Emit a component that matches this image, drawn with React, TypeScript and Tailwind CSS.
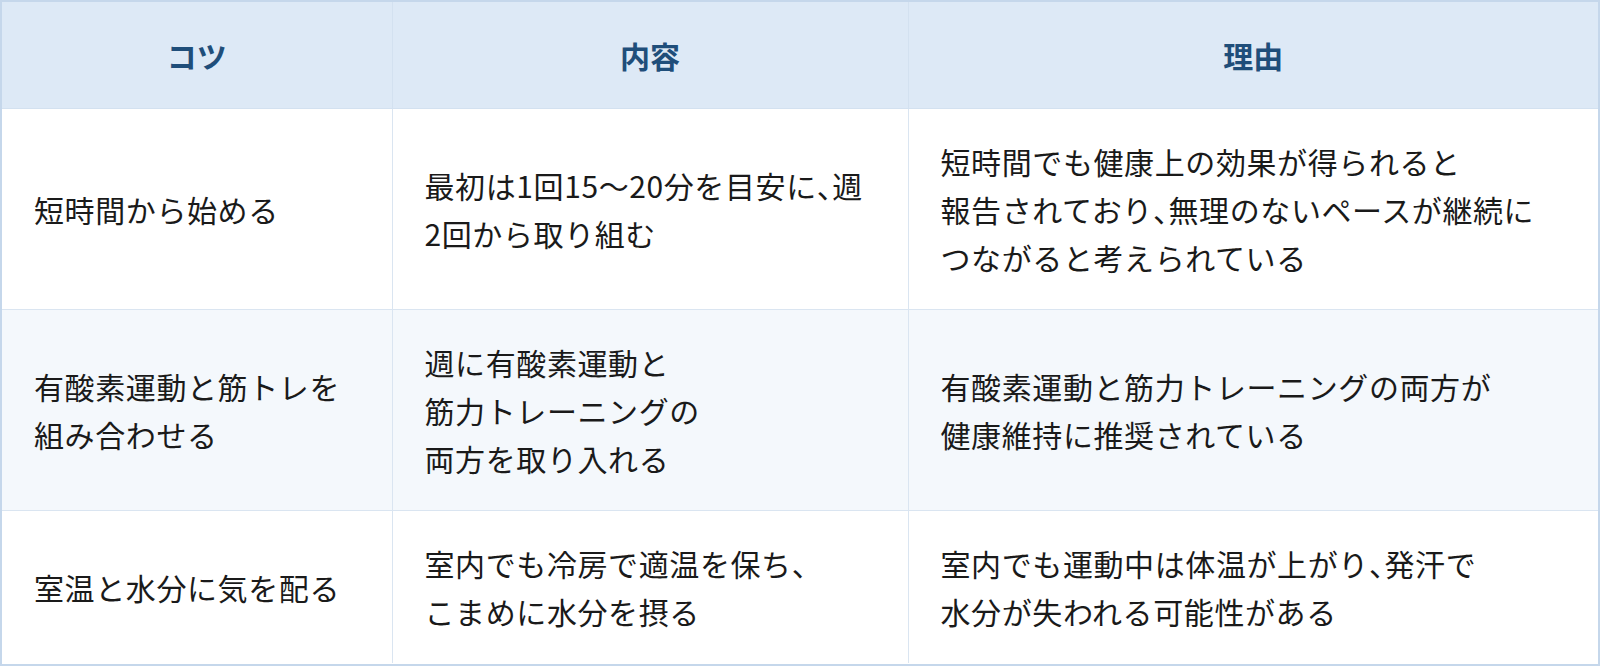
import React from 'react';

type Row = { tip: React.ReactNode; detail: React.ReactNode; reason: React.ReactNode };

// half-width touten, as in the reference
const Comma = () => <span className="[font-feature-settings:'halt']">、</span>;

const rows: Row[] = [
  {
    tip: '短時間から始める',
    detail: (
      <>
        最初は1回15〜20分を目安に<Comma />週
        <br />
        2回から取り組む
      </>
    ),
    reason: (
      <>
        短時間でも健康上の効果が得られると
        <br />
        報告されており<Comma />無理のないペースが継続に
        <br />
        つながると考えられている
      </>
    ),
  },
  {
    tip: (
      <>
        有酸素運動と筋トレを
        <br />
        組み合わせる
      </>
    ),
    detail: (
      <>
        週に有酸素運動と
        <br />
        筋力トレーニングの
        <br />
        両方を取り入れる
      </>
    ),
    reason: (
      <>
        有酸素運動と筋力トレーニングの両方が
        <br />
        健康維持に推奨されている
      </>
    ),
  },
  {
    tip: '室温と水分に気を配る',
    detail: (
      <>
        室内でも冷房で適温を保ち、
        <br />
        こまめに水分を摂る
      </>
    ),
    reason: (
      <>
        室内でも運動中は体温が上がり<Comma />発汗で
        <br />
        水分が失われる可能性がある
      </>
    ),
  },
];

const cell =
  'border border-[#dae5f1] px-8 py-7 align-middle text-[30px] leading-[48px] tracking-[0.02em] text-[#1a1a1a] whitespace-nowrap';

export default function App() {
  return (
    <div
      className="w-[1600px] h-[666px] bg-white"
      style={{ fontFamily: '"Noto Sans CJK JP", "Noto Sans", sans-serif' }}
    >
      <div className="h-full border-2 border-[#c5d7eb] overflow-hidden">
        <table className="w-full table-fixed border-collapse border-hidden">
          <colgroup>
            <col className="w-[390px]" />
            <col className="w-[516px]" />
            <col />
          </colgroup>
          <thead>
            <tr className="bg-[#dde9f6]">
              {['コツ', '内容', '理由'].map((h) => (
                <th
                  key={h}
                  className="border border-[#d3e1f0] py-[29px] text-center text-[30px] leading-[48px] font-bold text-[#1f4e7a]"
                >
                  {h}
                </th>
              ))}
            </tr>
          </thead>
          <tbody>
            {rows.map((r, i) => (
              <tr key={i} className={i === 1 ? 'bg-[#f4f8fc]' : 'bg-white'}>
                <td className={cell}>{r.tip}</td>
                <td className={cell}>{r.detail}</td>
                <td className={cell}>{r.reason}</td>
              </tr>
            ))}
          </tbody>
        </table>
      </div>
    </div>
  );
}
